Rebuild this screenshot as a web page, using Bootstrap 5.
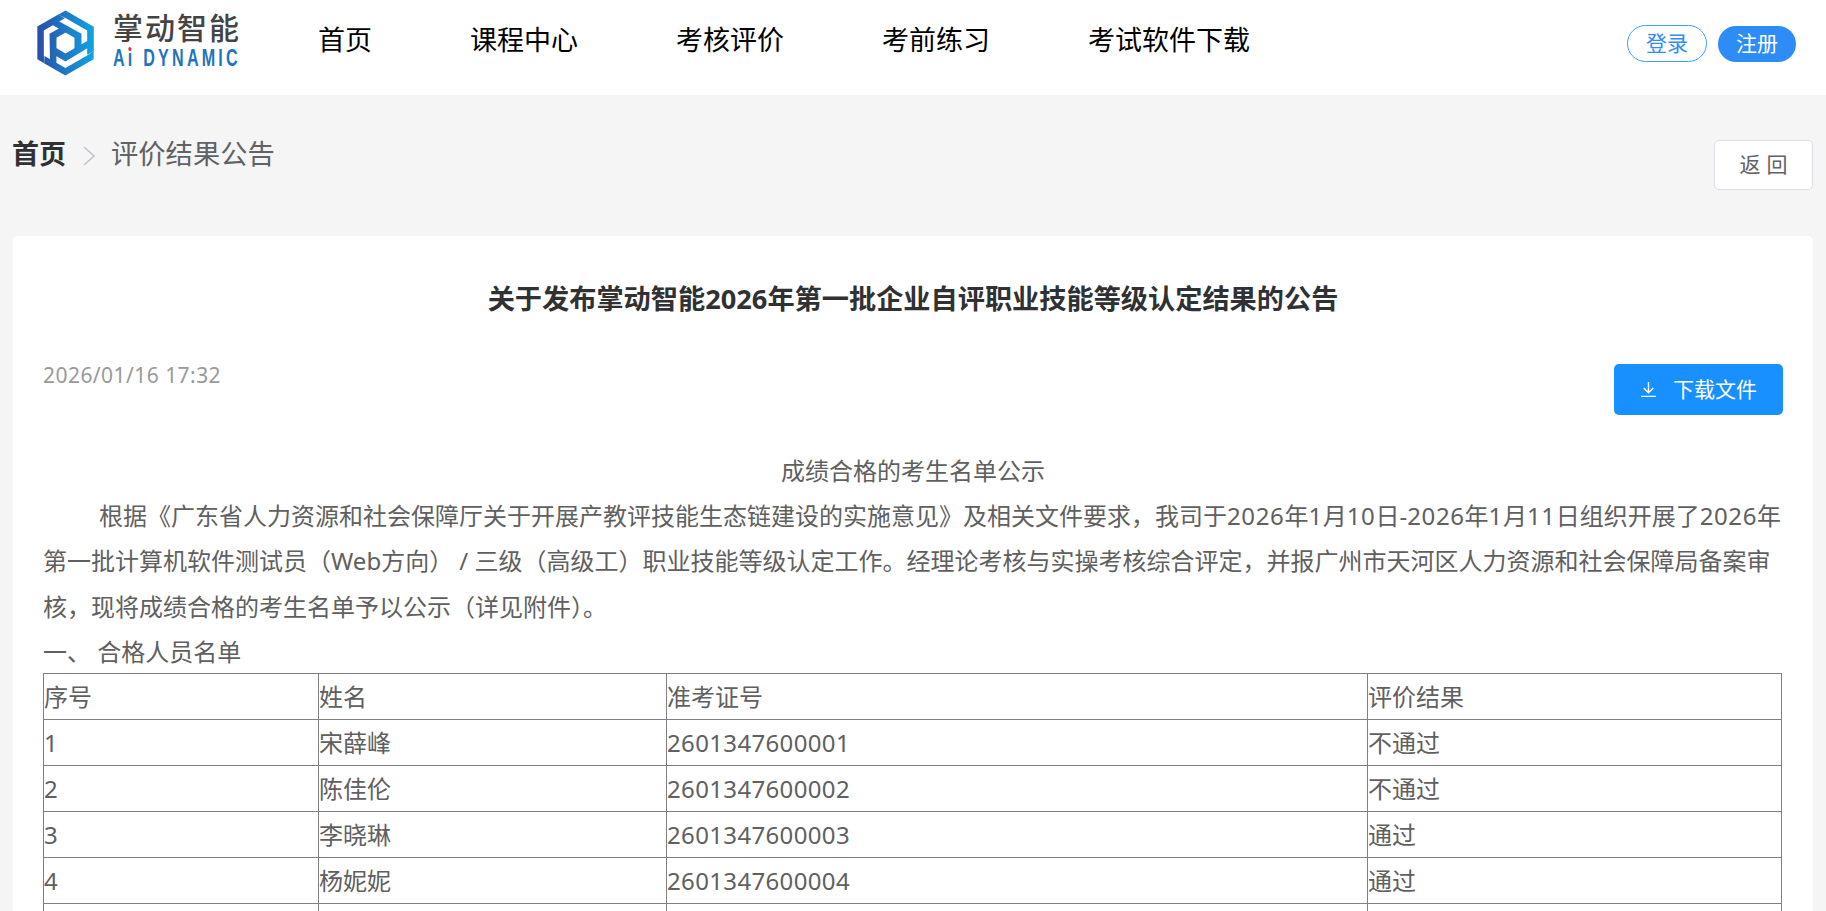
<!DOCTYPE html>
<html lang="zh">
<head>
<meta charset="utf-8">
<title>评价结果公告</title>
<link rel="stylesheet" href="https://cdn.jsdelivr.net/npm/bootstrap@5.3.0/dist/css/bootstrap.min.css">
<style>
html,body{height:100%;overflow:hidden}
body{background:#f5f5f5;font-family:"Noto Sans","Noto Sans CJK SC",sans-serif;color:#666}
.site-head{height:95px;background:#fff;padding:0 30px 0 37px}
.logo-box{width:203px;height:75px;margin-top:10px;position:relative}
.logo-text{width:130px;margin-left:19px;white-space:nowrap}
.logo-cn{font-size:30px;line-height:38px;letter-spacing:2px;color:#444;font-weight:500;margin-top:-1px}
.logo-en{font-size:23px;line-height:22px;letter-spacing:4.6px;color:#1f74bd;font-weight:700;font-family:"Liberation Sans",sans-serif;transform:scaleX(.7);transform-origin:left center;position:relative}
.logo-star{position:absolute;left:22px;top:0;width:4px;height:4px;border-radius:50%;background:#e0333a}
.site-nav{margin:0 0 0 78px;gap:98px;font-size:27px;line-height:80px;color:#000}
.site-nav a{color:#000;text-decoration:none}
.pill-login,.pill-reg{font-size:21px;line-height:1;border-radius:20px;display:flex;align-items:center;justify-content:center;text-decoration:none;height:37px}
.pill-login{width:80px;border:1px solid #409eff;color:#2e8cf7;margin-right:11px}
.pill-reg{width:78px;height:36px;background:#2e8cf7;color:#fff}
.crumb-row{padding:45px 13px 0 12px;height:141px}
.crumb-home{font-size:27px;font-weight:700;color:#303133;line-height:40px;margin-top:-6px}
.crumb-sep{margin:-2px 16px 0 17px}
.crumb-cur{font-size:27.3px;color:#606266;line-height:40px;margin-top:-6px}
.back-btn{width:99px;height:50px;background:#fff;border:1px solid #dcdfe6;border-radius:5px;font-size:21px;color:#606266;letter-spacing:6px;padding:0 0 0 6px}
.main-card{margin:0 13px;background:#fff;border-radius:5px;padding:0 30px;height:900px}
.doc-title{font-size:27.2px;font-weight:700;color:#303133;text-align:center;line-height:40px;padding-top:43px;margin:0;height:100px}
.doc-meta{height:112px;padding-top:28px}
.doc-date{font-size:21px;letter-spacing:.45px;color:#999;line-height:30px;margin-top:-4px}
.dl-btn{width:169px;height:51px;background:#1890ff;border:0;border-radius:5px;color:#fff;font-size:21px}
.doc-body{font-size:24px;line-height:45.2px;color:#606060}
.doc-center{text-align:center;margin:0}
.doc-para{margin:0}
.doc-first{display:block;padding-left:56px;white-space:nowrap}
.doc-head{margin:0}
.dig{letter-spacing:.62px}
.res-table{width:1738px;table-layout:fixed;border-collapse:collapse;font-size:24px;line-height:32px;color:#606060;margin-top:-1px}
.res-table td{border:1px solid #808080;padding:6px 0;height:46px;vertical-align:middle}
.cell-num{letter-spacing:.35px}
</style>
</head>
<body>
<header class="site-head d-flex align-items-start">
  <div class="logo-box d-flex flex-shrink-0">
    <svg width="57" height="66" viewBox="-28.5 -33 57 66" class="flex-shrink-0" aria-hidden="true">
      <defs>
        <linearGradient id="lgA" gradientUnits="userSpaceOnUse" x1="-28" y1="0" x2="28" y2="0"><stop offset="0" stop-color="#2a4ea8"/><stop offset="1" stop-color="#10a4e0"/></linearGradient>
        <linearGradient id="lgB" gradientUnits="userSpaceOnUse" x1="-28" y1="0" x2="28" y2="0" gradientTransform="rotate(-120)"><stop offset="0" stop-color="#2a4ea8"/><stop offset="1" stop-color="#10a4e0"/></linearGradient>
        <linearGradient id="lgC" gradientUnits="userSpaceOnUse" x1="-28" y1="0" x2="28" y2="0" gradientTransform="rotate(-240)"><stop offset="0" stop-color="#2a4ea8"/><stop offset="1" stop-color="#10a4e0"/></linearGradient>
      </defs>
      <g fill="url(#lgA)"><polygon points="-7.3,-28.3 0,-32.5 28.3,-16.2 28.3,8 21.7,11.8 21.7,-12.5 0,-25"/><polygon points="-8,-22.5 16,-9.2 16,7 9,11 9,-5.2 -13,-18"/></g>
      <g fill="url(#lgB)" transform="rotate(120)"><polygon points="-7.3,-28.3 0,-32.5 28.3,-16.2 28.3,8 21.7,11.8 21.7,-12.5 0,-25"/><polygon points="-8,-22.5 16,-9.2 16,7 9,11 9,-5.2 -13,-18"/></g>
      <g fill="url(#lgC)" transform="rotate(240)"><polygon points="-7.3,-28.3 0,-32.5 28.3,-16.2 28.3,8 21.7,11.8 21.7,-12.5 0,-25"/><polygon points="-8,-22.5 16,-9.2 16,7 9,11 9,-5.2 -13,-18"/></g>
    </svg>
    <div class="logo-text">
      <div class="logo-cn">掌动智能</div>
      <div class="logo-en">Ai DYNAMIC<span class="logo-star"></span></div>
    </div>
  </div>
  <nav class="site-nav d-flex">
    <a href="#">首页</a><a href="#">课程中心</a><a href="#">考核评价</a><a href="#">考前练习</a><a href="#">考试软件下载</a>
  </nav>
  <div class="ms-auto d-flex align-items-center" style="height:87px">
    <a class="pill-login" href="#">登录</a><a class="pill-reg" href="#">注册</a>
  </div>
</header>
<div class="crumb-row d-flex justify-content-between align-items-start">
  <div class="d-flex align-items-center">
    <span class="crumb-home">首页</span>
    <svg class="crumb-sep" width="12" height="20" viewBox="0 0 12 20" aria-hidden="true"><path d="M1 1l10 9-10 9" fill="none" stroke="#c0c4cc" stroke-width="1.6"/></svg>
    <span class="crumb-cur">评价结果公告</span>
  </div>
  <button class="back-btn" type="button">返回</button>
</div>
<main class="main-card">
  <h1 class="doc-title">关于发布掌动智能2026年第一批企业自评职业技能等级认定结果的公告</h1>
  <div class="doc-meta d-flex justify-content-between align-items-start">
    <span class="doc-date">2026/01/16 17:32</span>
    <button class="dl-btn d-flex align-items-center justify-content-center gap-3" type="button">
      <svg width="17" height="17" viewBox="0 0 16 16" aria-hidden="true"><path d="M8 1v9M3.5 6.5 8 11l4.5-4.5M1 14.5h14" fill="none" stroke="#fff" stroke-width="1.3"/></svg>
      <span>下载文件</span>
    </button>
  </div>
  <div class="doc-body">
    <p class="doc-center">成绩合格的考生名单公示</p>
    <p class="doc-para"><span class="doc-first">根据《广东省人力资源和社会保障厅关于开展产教评技能生态链建设的实施意见》及相关文件要求，我司于<span class="dig">2026</span>年<span class="dig">1</span>月<span class="dig">10</span>日-<span class="dig">2026</span>年<span class="dig">1</span>月<span class="dig">11</span>日组织开展了<span class="dig">2026</span>年</span>第一批计算机软件测试员（Web方向） / 三级（高级工）职业技能等级认定工作。经理论考核与实操考核综合评定，并报广州市天河区人力资源和社会保障局备案审核，现将成绩合格的考生名单予以公示（详见附件）。</p>
    <p class="doc-head">一、 合格人员名单</p>
    <table class="res-table">
      <colgroup><col style="width:275px"><col style="width:348px"><col style="width:701px"><col style="width:414px"></colgroup>
      <tbody>
        <tr><td>序号</td><td>姓名</td><td>准考证号</td><td>评价结果</td></tr>
        <tr><td class="cell-num">1</td><td>宋薛峰</td><td class="cell-num">2601347600001</td><td>不通过</td></tr>
        <tr><td class="cell-num">2</td><td>陈佳伦</td><td class="cell-num">2601347600002</td><td>不通过</td></tr>
        <tr><td class="cell-num">3</td><td>李晓琳</td><td class="cell-num">2601347600003</td><td>通过</td></tr>
        <tr><td class="cell-num">4</td><td>杨妮妮</td><td class="cell-num">2601347600004</td><td>通过</td></tr>
        <tr><td>&nbsp;</td><td>&nbsp;</td><td>&nbsp;</td><td>&nbsp;</td></tr>
      </tbody>
    </table>
  </div>
</main>
</body>
</html>
